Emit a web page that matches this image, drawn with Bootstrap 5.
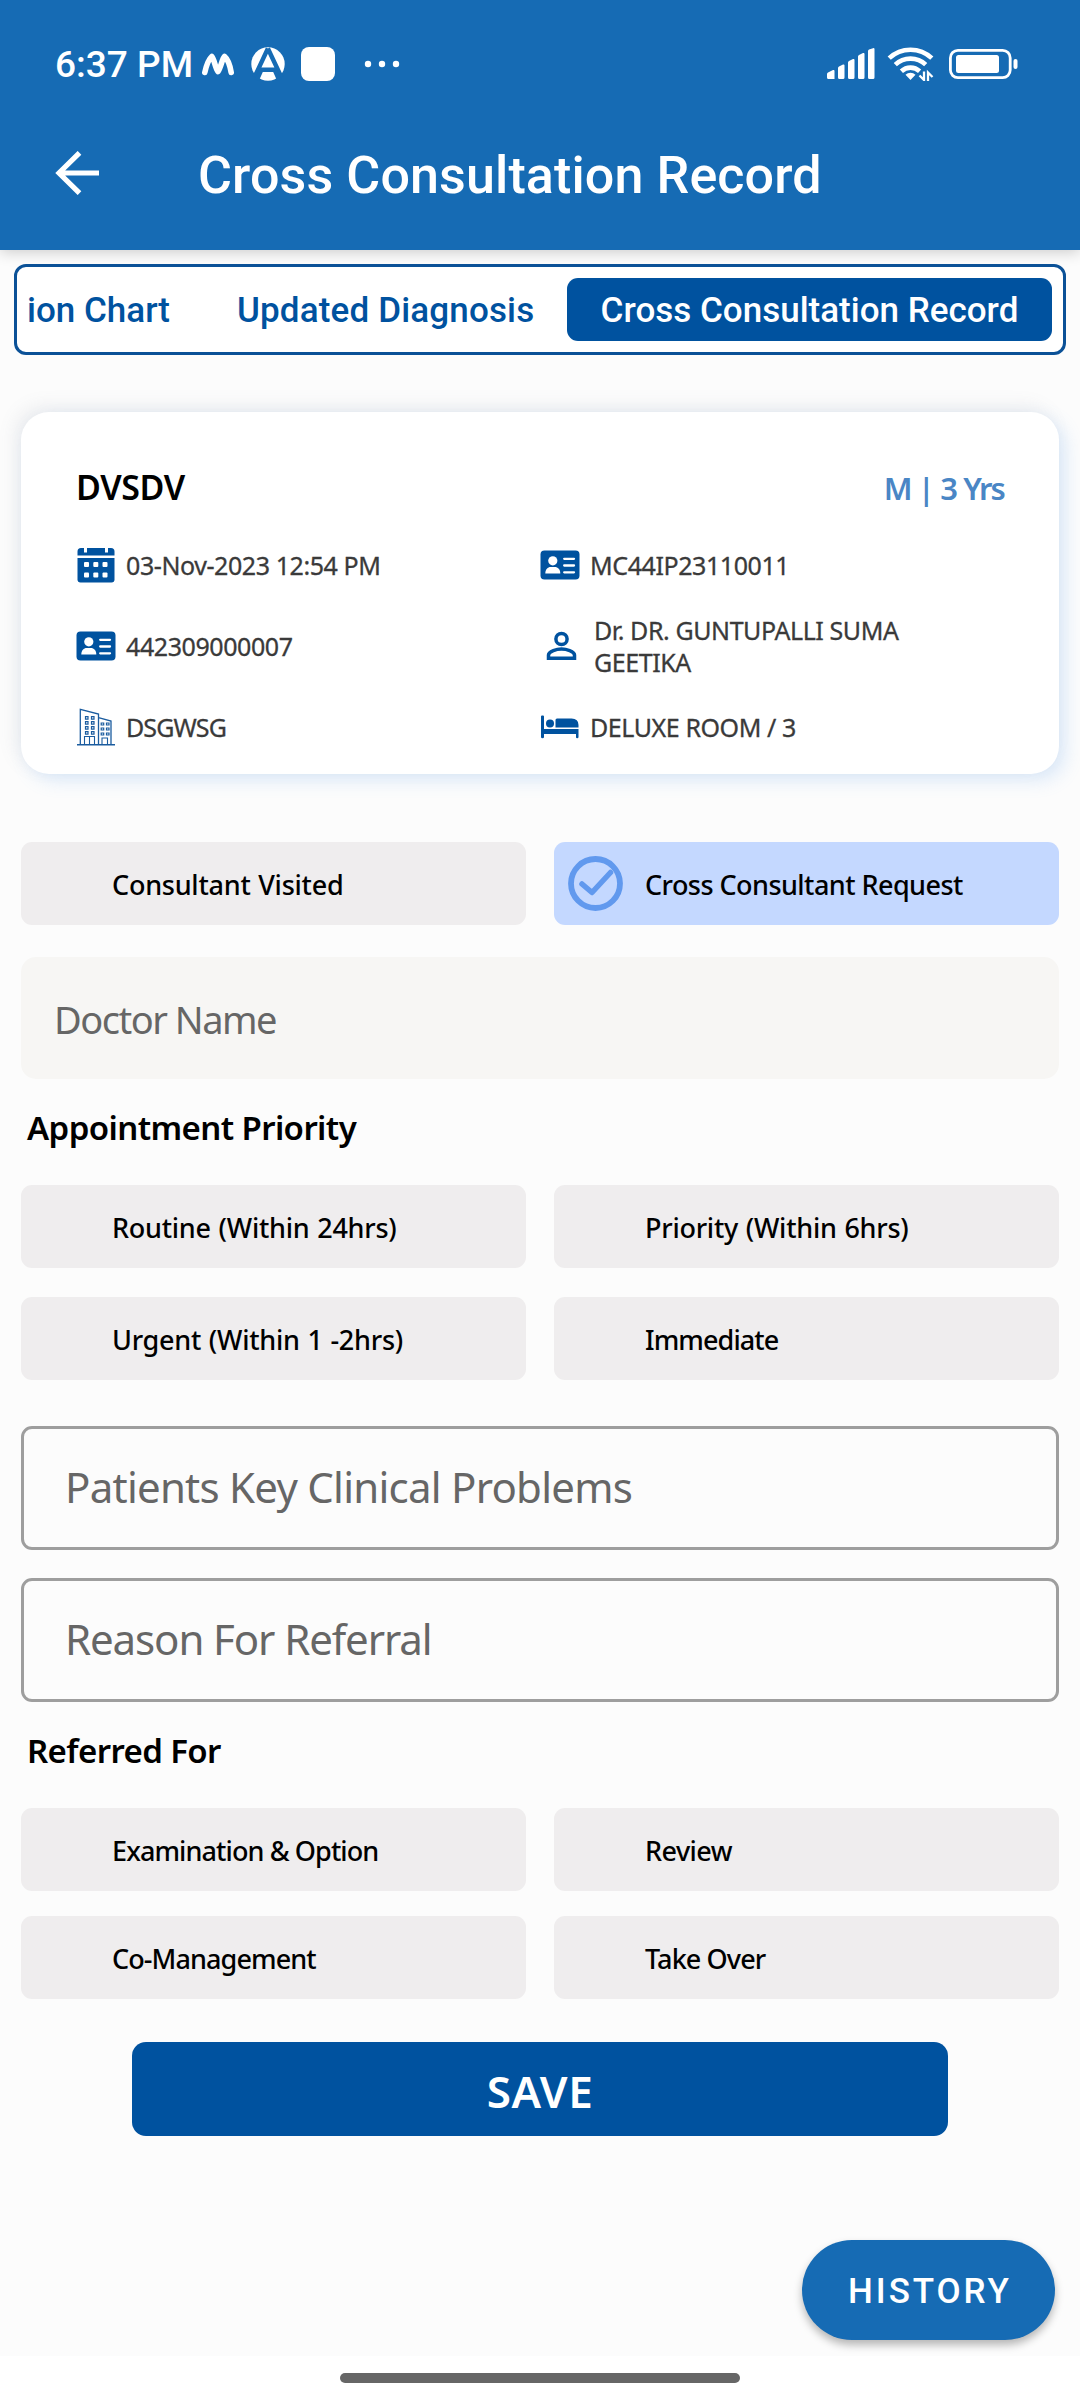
<!DOCTYPE html>
<html lang="en">
<head>
<meta charset="utf-8">
<meta name="viewport" content="width=device-width, initial-scale=1">
<title>Cross Consultation Record</title>
<link href="https://cdn.jsdelivr.net/npm/bootstrap@5.3.0/dist/css/bootstrap.min.css" rel="stylesheet">
<style>
  :root { --brand: #166bb4; --deep: #00529f; }
  body { background: #fcfcfc; font-family: "Noto Sans", "Open Sans", sans-serif; color: #000; width: 1080px; height: 2400px; overflow: hidden; }
  svg { display: block; flex: none; }
  .app-top { background: var(--brand); height: 250px; box-shadow: 0 2px 14px rgba(0,0,0,.2); font-family: Roboto, sans-serif; font-weight: 500; }
  .status { height: 127px; padding: 0 62px 0 55px; }
  .clock { font-size: 37px; line-height: 1; padding-top: 2px; width: 147px; font-weight: 500; white-space: nowrap; }
  .titlebar { height: 92px; padding-left: 55px; }
  .titlebar h1 { font-size: 52px; line-height: 1; margin: 0 0 0 99px; padding-top: 6px; font-weight: 500; letter-spacing: .12px; }
  .tabs { margin: 14px 14px 0; height: 91px; border: 3px solid #0b5197; border-radius: 12px; background: #fff; padding: 11px 0 0 10px; font: 500 35px/66px Roboto, sans-serif; color: var(--deep); white-space: nowrap; }
  .tabs .t1 { width: 210px; } .tabs .t2 { width: 330px; letter-spacing: .15px; }
  .tabs .t3 { width: 485px; height: 63px; border-radius: 11px; background: var(--deep); color: #fff; text-align: center; }
  .wrap { padding: 0 21px; }
  .patient { margin-top: 57px; height: 362px; border: 0; border-radius: 28px; background: #fff; padding: 46px 55px 0; box-shadow: -6px -6px 18px rgba(110,120,140,.11), 7px 7px 18px rgba(100,165,240,.2); }
  .patient-head { height: 58px; margin-bottom: 8px; line-height: 59px; font-weight: 600; }
  .pname { font-size: 34px; letter-spacing: -.4px; }
  .page { font-size: 31px; letter-spacing: -1.9px; word-spacing: 1px; padding-top: 1px; color: #4a86c5; }
  .info { width: 464px; height: 81px; font-size: 25px; line-height: 32px; color: #3a3a3a; letter-spacing: -.42px; }
  .info svg { width: 40px; margin-right: 10px; fill: var(--deep); }
  .info svg.person { margin: 0 13px 0 5px; width: 36px; }
  .info span { padding-top: 1px; -webkit-text-stroke: .3px #3a3a3a; }
  .opts { column-gap: 28px; }
  .opt { width: 505px; height: 83px; border-radius: 11px; background: #efedee; font-size: 27px; font-weight: 500; letter-spacing: -.55px; padding: 4px 0 0 91px; position: relative; }
  .opt.on { background: #c4d8ff; }
  .opt svg { position: absolute; left: 14px; top: 14px; }
  .roomy { letter-spacing: -.25px; word-spacing: 1px; }
  .snug { letter-spacing: -.9px; }
  .first { margin-top: 68px; } .gap-a { row-gap: 29px; } .gap-b { row-gap: 25px; }
  .doctor { margin-top: 32px; height: 122px; border-radius: 15px; background: #f7f6f4; padding: 3px 33px 0; font-size: 38px; letter-spacing: -1.5px; color: #666; }
  .sec { font-size: 33px; font-weight: 600; line-height: 98px; height: 106px; margin: 0; padding-left: 6px; letter-spacing: -.6px; }
  .field { height: 124px; border: 3px solid #9e9e9e; border-radius: 11px; padding: 0 41px 4px; font-size: 42px; letter-spacing: -.75px; color: #666; }
  .field-key { margin-top: 46px; } .field-reason { margin-top: 28px; letter-spacing: -1.1px; }
  .save { margin: 43px 0 0 111px; width: 816px; height: 94px; border: 0; border-radius: 14px; background: var(--deep); color: #fff; font-size: 44px; font-weight: 600; line-height: 1; padding: 3px 0 0; letter-spacing: .6px; }
  .fab { position: absolute; left: 802px; top: 2240px; width: 253px; height: 100px; border: 0; border-radius: 50px; background: var(--brand); color: #fff; font: 500 35px/1 Roboto, sans-serif; letter-spacing: 2.9px; box-shadow: 0 5px 9px rgba(0,0,0,.28); padding: 2px 0 0 3px; }
  .sysbar { height: 44px; background: #fff; padding-top: 17px; }
  .sysbar div { width: 400px; height: 10px; border-radius: 5px; background: #666; }
</style>
<script src="https://cdn.jsdelivr.net/npm/bootstrap@5.3.0/dist/js/bootstrap.bundle.min.js"></script>
</head>
<body class="d-flex flex-column position-relative">
<svg width="0" height="0" class="position-absolute">
  <symbol id="idcard" viewBox="0 0 40 30">
    <rect x=".5" y=".5" width="39" height="29" rx="4"/>
    <g fill="#fff"><circle cx="12.8" cy="10.8" r="4.6"/><path d="M5.300 23.400c0-4 2.500-6.400 5.400-6.400h4.200c2.900 0 5.400 2.400 5.400 6.400z"/></g>
    <path d="M24.200 8.800h9.800M24.200 15.500h9.800M24.200 22.300h9.800" stroke="#fff" stroke-width="2.300" stroke-linecap="round"/>
  </symbol>
</svg>

<header class="app-top text-white flex-shrink-0">
  <div class="status d-flex align-items-center">
    <div class="clock">6:37 PM</div>
    <svg width="32" height="24" viewBox="0 0 32 24"><path d="M2.800 20.500C4 15 7 7 9.800 4.500c2.500 2.500 3.200 11 6.200 15C19 15.500 20 7 22.500 4.500c3 2.500 5.700 10 6.700 16" fill="none" stroke="#fff" stroke-width="5.600" stroke-linecap="round" stroke-linejoin="round"/></svg>
    <svg class="ms-3" width="36" height="34" viewBox="0 0 36 34"><circle cx="18" cy="17" r="16.700" fill="#fff"/><path d="M17.900 1.500L4.500 30M17.900 1.500L31.300 30M8.500 22.800h19" stroke="#166bb4" stroke-width="4.400" fill="none"/><path d="M4.800 32l5-10 3 3-4 9zM31.200 32l-5-10-3 3 4 9z" fill="#166bb4"/></svg>
    <svg style="margin-left:15px" width="34" height="34" viewBox="0 0 34 34"><rect width="34" height="34" rx="8" fill="#fff"/></svg>
    <svg style="margin-left:29px" width="36" height="8" viewBox="0 0 36 8" fill="#fff"><circle cx="4" cy="4" r="3.200"/><circle cx="18" cy="4" r="3.200"/><circle cx="32" cy="4" r="3.200"/></svg>
    <svg class="ms-auto" width="48" height="31" viewBox="0 0 48 31" fill="#fff"><path d="M0 26q0-1 1-1.600L6 22q1.500-.5 1.500 1v8H1.500Q0 31 0 29.500zM11 20q0-1 1-1.600L16 16.500q1.500-.5 1.500 1V29.500q0 1.500-1.500 1.500H12.500Q11 31 11 29.500zM21 14.500q0-1 1-1.600L26 11q1.500-.5 1.500 1V29.500q0 1.500-1.500 1.500H22.500Q21 31 21 29.500zM31 8.500q0-1 1-1.600L36 5q1.500-.5 1.500 1V29.500q0 1.500-1.500 1.500H32.500Q31 31 31 29.500zM41 3q0-1 1-1.600L46 .2q1.500-.5 1.500 1V29.500q0 1.500-1.500 1.500H42.500Q41 31 41 29.500z"/></svg>
    <svg style="margin-left:12px" width="48" height="35" viewBox="0 0 48 35"><g fill="none" stroke="#fff" stroke-width="4.600"><path d="M2.200 12.200a31 31 0 0 1 42.600 0"/><path d="M8.300 18.700a22 22 0 0 1 30.400 0"/><path d="M14.400 25.200a13.300 13.300 0 0 1 18.200 0"/></g><path d="M23.500 34l-5-5.300a7.300 7.300 0 0 1 10 0z" fill="#fff"/><path d="M37 25.500V34l-4.500-4.500M41 35V26.500l4.500 4.500" fill="none" stroke="#fff" stroke-width="2.300"/></svg>
    <svg style="margin-left:14px" width="69" height="30" viewBox="0 0 69 30"><rect x="1.400" y="1.400" width="59.800" height="27.200" rx="7.500" fill="none" stroke="#fff" stroke-width="2.800"/><rect x="7" y="6" width="43" height="18" rx="2.500" fill="#fff"/><rect x="64.500" y="10" width="4" height="10" rx="2" fill="#fff"/></svg>
  </div>
  <div class="titlebar d-flex align-items-center">
    <svg width="44" height="44" viewBox="0 0 44 44"><path d="M44 22H4M24.500 1.800L4 22l20.500 20.200" fill="none" stroke="#fff" stroke-width="5.200"/></svg>
    <h1>Cross Consultation Record</h1>
  </div>
</header>

<nav class="tabs d-flex flex-shrink-0">
  <div class="t1">ion Chart</div><div class="t2">Updated Diagnosis</div><div class="t3">Cross Consultation Record</div>
</nav>

<main class="wrap flex-grow-1">
  <section class="card patient">
    <div class="patient-head d-flex justify-content-between"><span class="pname">DVSDV</span><span class="page">M | 3 Yrs</span></div>
    <div class="d-flex">
      <div>
        <div class="info d-flex align-items-center"><svg height="36" viewBox="0 0 40 36"><path d="M1.500 4.500Q1.500 1 5 1h3v4.500h3V1h18v4.500h3V1h3q3.500 0 3.500 3.500V8.500h-37z"/><path d="M1.500 11h37v21.500q0 3-3 3h-31q-3 0-3-3z"/><g fill="#fff"><rect x="8" y="15" width="5" height="5" rx="1"/><rect x="17.300" y="15" width="5" height="5" rx="1"/><rect x="26.500" y="15" width="5" height="5" rx="1"/><rect x="8" y="25.500" width="5" height="5" rx="1"/><rect x="17.300" y="25.500" width="5" height="5" rx="1"/><rect x="26.500" y="25.500" width="5" height="5" rx="1"/></g></svg><span>03-Nov-2023 12:54 PM</span></div>
        <div class="info d-flex align-items-center"><svg height="30"><use href="#idcard"/></svg><span>442309000007</span></div>
        <div class="info snug d-flex align-items-center"><svg height="38" viewBox="0 0 40 38" style="fill:none" stroke="#1b5c9f"><path d="M1 36.800h38" stroke-width="1.600"/><path d="M4.300 36V1.300L22.500 6v30M22.500 9.600L35 13v23" stroke-width="1.300"/><path d="M8.500 36v-7.500h10V36M13.500 28.500V36M26 36v-6h5.500v6" stroke-width="1.100"/><path d="M9.500 8.700h2.500v2.500H9.500zM15.500 8.700H18v2.500h-2.500zM9.500 13.700h2.500v2.500H9.500zM15.500 13.700H18v2.500h-2.500zM9.500 18.700h2.500v2.500H9.500zM15.500 18.700H18v2.500h-2.500zM9.500 23.700h2.500v2.500H9.500zM15.500 23.700H18v2.500h-2.500zM25.200 15h2.500v2h-2.500zM30.500 15H33v2h-2.500zM25.200 20h2.500v2h-2.500zM30.500 20H33v2h-2.500zM25.200 25h2.500v2h-2.500zM30.500 25H33v2h-2.500z" stroke-width="1.200"/></svg><span>DSGWSG</span></div>
      </div>
      <div>
        <div class="info d-flex align-items-center"><svg height="30"><use href="#idcard"/></svg><span>MC44IP23110011</span></div>
        <div class="info d-flex align-items-center"><svg class="person" height="30" viewBox="0 0 36 30"><g fill="none" stroke="#00529f" stroke-width="3.500"><circle cx="16.500" cy="8" r="5.600"/><path d="M3.500 27.300v-3.200c0-4 8.500-6 13-6s13 2 13 6v3.200z"/></g></svg><span>Dr. DR. GUNTUPALLI SUMA<br>GEETIKA</span></div>
        <div class="info d-flex align-items-center"><svg height="24" viewBox="0 0 40 24"><path d="M1 1.500Q1 .5 2 .5h1q1 0 1 1V14h34.500V22q0 1.300-1.300 1.300T36 22v-3H4v3q0 1.300-1.500 1.300T1 22z"/><circle cx="10" cy="8.500" r="4"/><path d="M15.500 12.500V5q0-1.500 1.500-1.500h14.500q7 0 7 6.500v2.500z"/></svg><span>DELUXE ROOM / 3</span></div>
      </div>
    </div>
  </section>

  <div class="opts first d-flex">
    <div class="opt roomy d-flex align-items-center">Consultant Visited</div>
    <div class="opt on d-flex align-items-center"><svg width="56" height="56" viewBox="0 0 56 56" fill="none" stroke="#6199ee"><circle cx="27.500" cy="27.500" r="24.500" stroke-width="5.800"/><path d="M14 28l10 8.500L42.500 16.500" stroke-width="5.500" stroke-linecap="round" stroke-linejoin="round"/></svg>Cross Consultant Request</div>
  </div>

  <div class="doctor d-flex align-items-center">Doctor Name</div>

  <h2 class="sec">Appointment Priority</h2>
  <div class="opts gap-a d-flex flex-wrap">
    <div class="opt roomy d-flex align-items-center">Routine (Within 24hrs)</div>
    <div class="opt roomy d-flex align-items-center">Priority (Within 6hrs)</div>
    <div class="opt roomy d-flex align-items-center">Urgent (Within 1 -2hrs)</div>
    <div class="opt snug d-flex align-items-center">Immediate</div>
  </div>

  <div class="field field-key d-flex align-items-center">Patients Key Clinical Problems</div>
  <div class="field field-reason d-flex align-items-center">Reason For Referral</div>

  <h2 class="sec">Referred For</h2>
  <div class="opts gap-b d-flex flex-wrap">
    <div class="opt snug d-flex align-items-center">Examination &amp; Option</div>
    <div class="opt d-flex align-items-center">Review</div>
    <div class="opt snug d-flex align-items-center">Co-Management</div>
    <div class="opt snug d-flex align-items-center">Take Over</div>
  </div>

  <button class="btn save d-block">SAVE</button>
</main>

<button class="btn fab">HISTORY</button>
<footer class="sysbar flex-shrink-0"><div class="mx-auto"></div></footer>
</body>
</html>
